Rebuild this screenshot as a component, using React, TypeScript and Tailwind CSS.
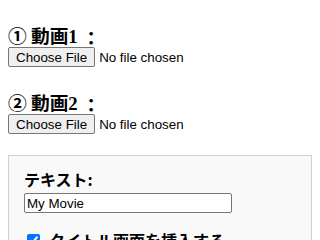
export default function App() {
  const fileCls =
    "block h-[20px] text-[13.33px] leading-[20px] text-black [font-family:'Liberation_Sans',Arial,sans-serif] file:mr-[4px] file:h-[20px] file:rounded-[2px] file:border file:border-solid file:border-[#767676] file:bg-[#efefef] file:px-[7px] file:py-0 file:text-black";
  const h3Cls =
    "h-[22px] text-[18.72px] font-bold leading-[22px] [font-family:'Noto_Sans_CJK_JP',sans-serif]";
  return (
    <div lang="ja" className="min-h-[240px] bg-white px-2 pt-[24px] text-black [font-family:'Liberation_Sans','Noto_Sans_CJK_JP',sans-serif]">
      <section>
        <h3 className={h3Cls}>
          ① 動画<span className="[font-family:'Liberation_Serif',serif]">1</span>
          <span className="ml-[4px] align-[-2px] [font-family:'Noto_Sans_CJK_JP',sans-serif]">：</span>
        </h3>
        <input type="file" className={`mt-[1px] ${fileCls}`} />
      </section>
      <section className="mt-[24px]">
        <h3 className={h3Cls}>
          ② 動画<span className="[font-family:'Liberation_Serif',serif]">2</span>
          <span className="ml-[4px] align-[-2px] [font-family:'Noto_Sans_CJK_JP',sans-serif]">：</span>
        </h3>
        <input type="file" className={`mt-[1px] ${fileCls}`} />
      </section>
      <div className="mt-[21px] border border-[#d0d0d0] bg-[#f9f9f9] px-[15px] pt-[15px] pb-[15px]">
        <label className="mb-[6px] block h-[16px] text-[16px] font-bold leading-[16px] [font-family:'Noto_Sans_CJK_JP',sans-serif]">
          テキスト:
        </label>
        <input
          type="text"
          defaultValue="My Movie"
          className="block h-[20px] w-[208px] rounded-[2px] border border-[#767676] bg-white px-[2px] text-[13.33px] leading-[18px] [font-family:'Liberation_Sans',Arial,sans-serif]"
        />
        <label className="mt-[17px] flex h-[20px] items-center gap-[9px] text-[16px] font-bold leading-[20px] [font-family:'Noto_Sans_CJK_JP',sans-serif]">
          <input type="checkbox" defaultChecked className="ml-[3px] h-[13px] w-[13px] accent-[#0075ff]" />
          タイトル画面を挿入する
        </label>
      </div>
    </div>
  );
}
